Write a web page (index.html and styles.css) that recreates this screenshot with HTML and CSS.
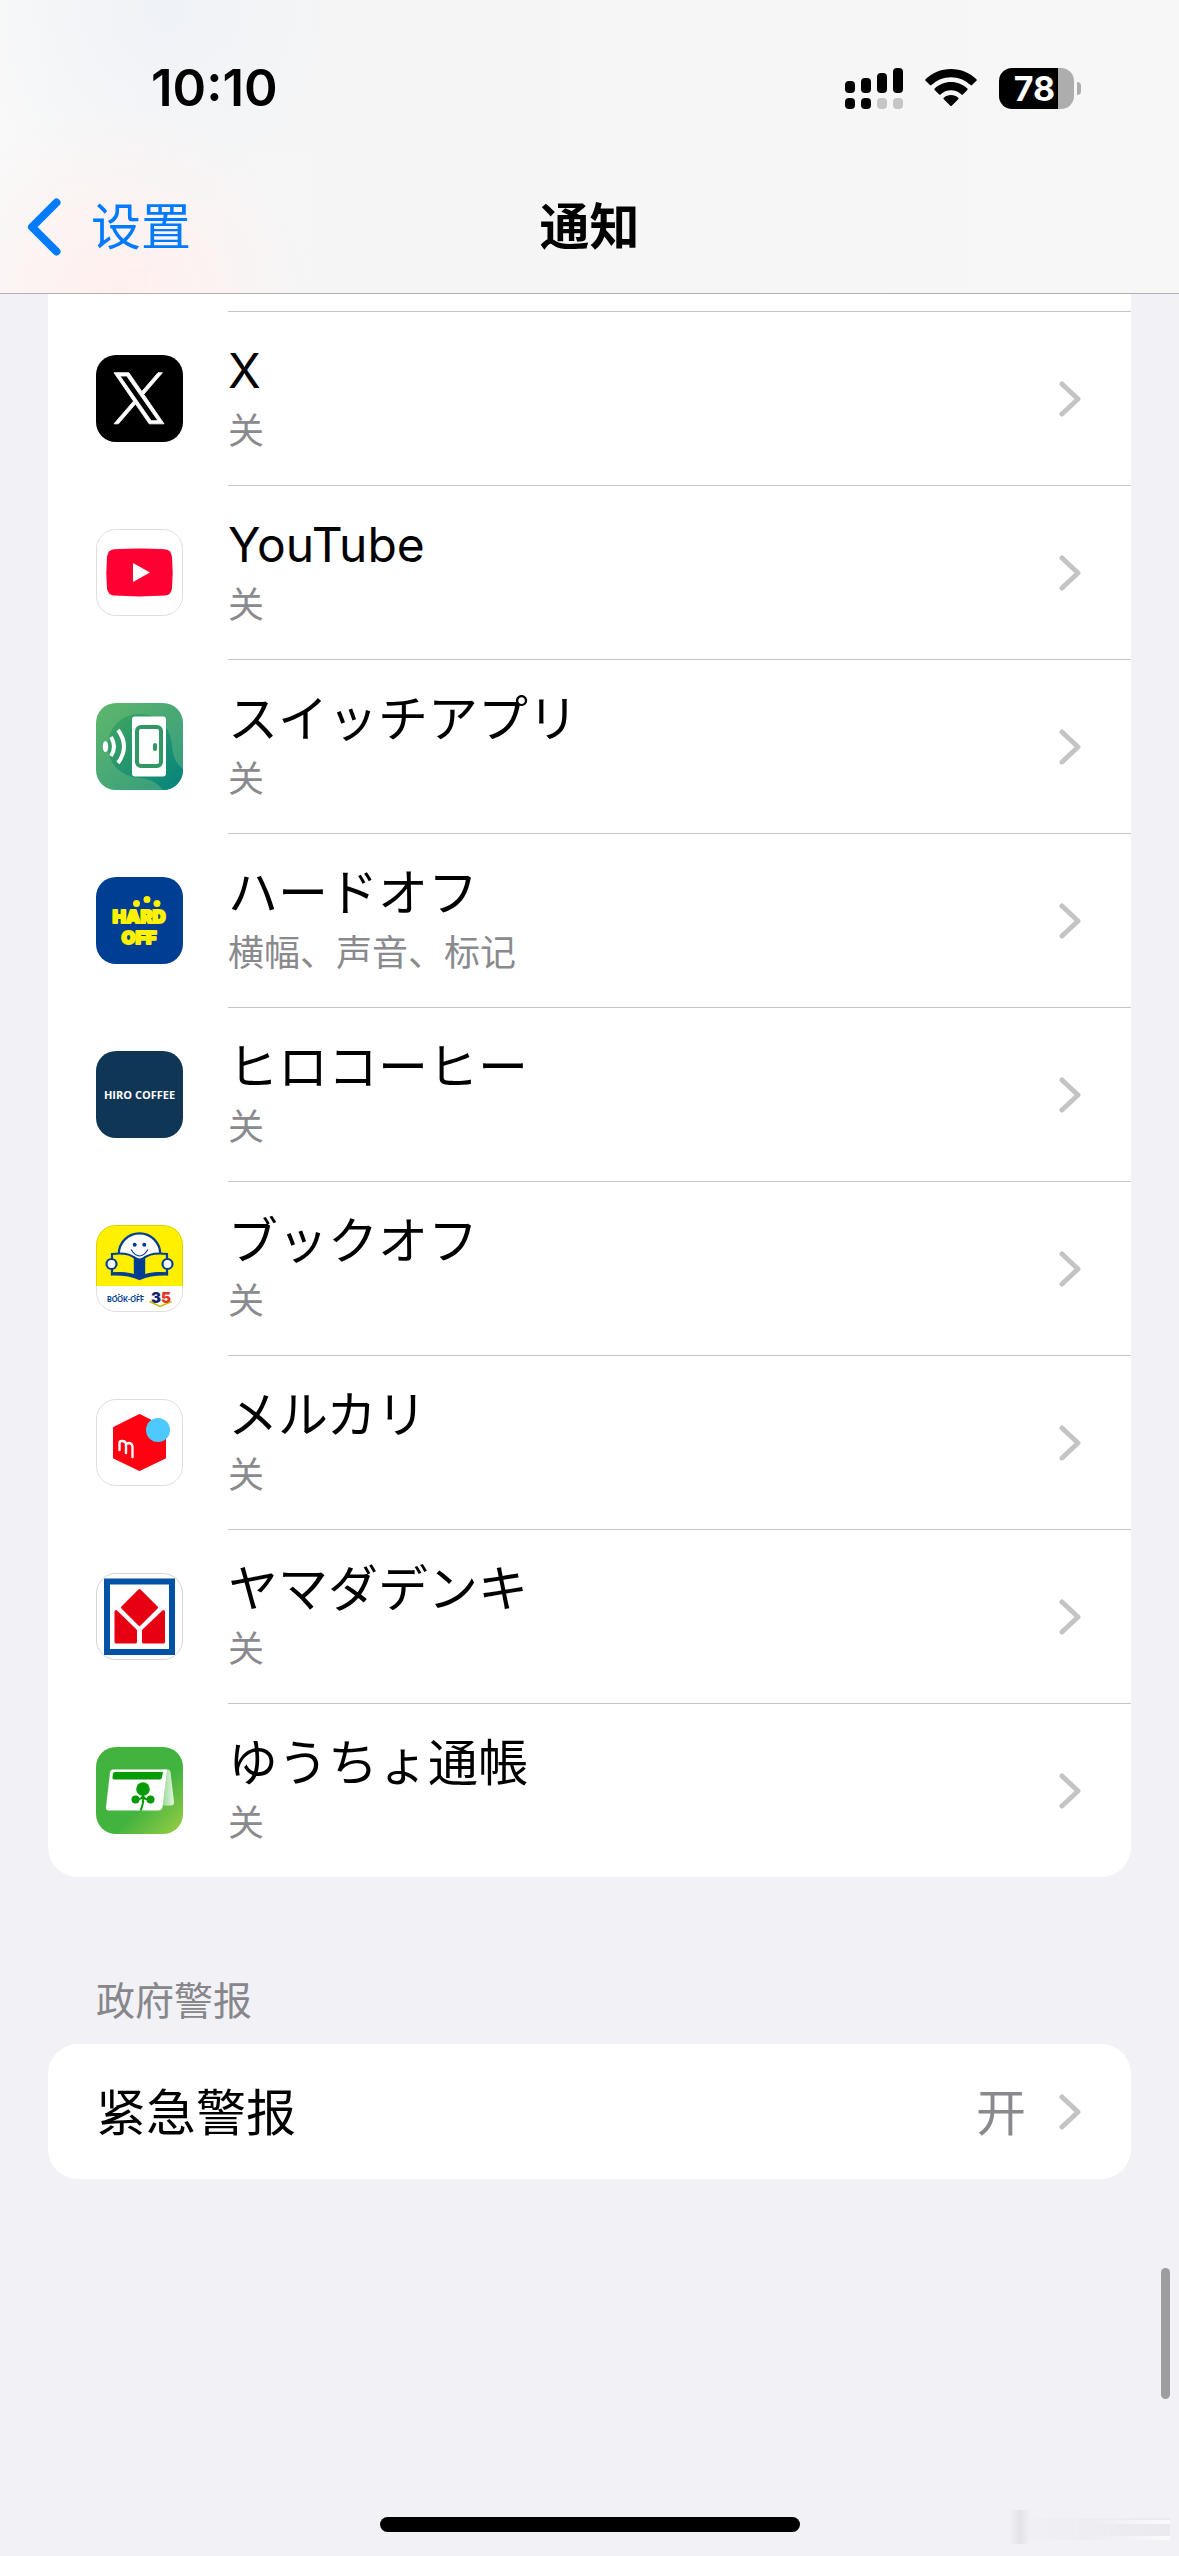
FILE: index.html
```html
<!DOCTYPE html>
<html lang="zh-CN">
<head>
<meta charset="utf-8">
<meta name="viewport" content="width=device-width, initial-scale=1">
<title>通知</title>
<link rel="stylesheet" href="styles.css">
</head>
<body>
<svg class="defs" width="0" height="0" aria-hidden="true">
  <symbol id="chevron" viewBox="0 0 22 36"><path d="M3 3 19 18 3 33" fill="none" stroke="#c4c4c7" stroke-width="5" stroke-linecap="round" stroke-linejoin="round"/></symbol>
</svg>

<header class="header">
  <div class="status">
    <time class="clock">10:10</time>
    <div class="indicators">
      <svg class="signal" viewBox="0 0 58 41" aria-hidden="true">
        <rect x="0" y="13" width="10" height="12" rx="4"/>
        <rect x="16" y="10" width="10" height="15" rx="4"/>
        <rect x="32" y="5" width="10" height="20" rx="4"/>
        <rect x="48" y="0" width="10" height="25" rx="4"/>
        <rect x="0" y="30" width="10" height="11" rx="4"/>
        <rect x="16" y="30" width="10" height="11" rx="4"/>
        <rect x="32" y="30" width="10" height="11" rx="4" fill="#c5c5c5"/>
        <rect x="48" y="30" width="10" height="11" rx="4" fill="#c5c5c5"/>
      </svg>
      <svg class="wifi" viewBox="0 0 52 38" aria-hidden="true">
        <path d="M26 0C16 0 7 4 .6 10.200a1 1 0 0 0 0 1.500l4.400 4.400a1 1 0 0 0 1.400 0C11.600 11.200 18.400 8.200 26 8.200s14.400 3 19.600 7.900a1 1 0 0 0 1.400 0l4.400-4.400a1 1 0 0 0 0-1.500C45 4 36 0 26 0z"/>
        <path d="M26 13c-6.300 0-12 2.500-16.300 6.500a1 1 0 0 0 0 1.500l4.400 4.400a1 1 0 0 0 1.400 0C18.300 22.800 22 21.200 26 21.200s7.700 1.600 10.500 4.200a1 1 0 0 0 1.400 0l4.400-4.400a1 1 0 0 0 0-1.500C38 15.500 32.300 13 26 13z"/>
        <path d="M26 26c-2.800 0-5.300 1-7.200 2.700a1 1 0 0 0 0 1.500l6.500 6.500a1 1 0 0 0 1.400 0l6.500-6.500a1 1 0 0 0 0-1.500C31.300 27 28.800 26 26 26z"/>
      </svg>
      <div class="battery"><span class="battery-level">78</span></div>
    </div>
  </div>
  <nav class="nav">
    <a class="back" href="#settings">
      <svg class="back-icon" viewBox="0 0 34 58" aria-hidden="true"><path d="M29.500 4.500 5 29 29.500 53.500" fill="none" stroke="#007aff" stroke-width="8" stroke-linecap="round" stroke-linejoin="round"/></svg>
      <span>设置</span>
    </a>
    <h1 class="title">通知</h1>
  </nav>
</header>

<main class="content">
  <ul class="card card-scrolled">
    <li class="row-tail"></li>
    <li>
      <a class="row" href="#x">
        <svg class="app-icon" viewBox="0 0 87 87" aria-hidden="true">
          <rect width="87" height="87" rx="20"/>
          <path transform="translate(18 17.700) scale(.0417)" fill="#fff" stroke="#fff" stroke-width="20" d="M714.163 519.284L1160.890 0H1055.030L667.137 450.887L357.328 0H0L468.492 681.821L0 1226.370H105.866L515.491 750.218L842.672 1226.370H1200L714.137 519.284ZM569.165 687.828L521.697 619.934L144.011 79.694H306.615L611.412 515.685L658.880 583.579L1055.080 1150.300H892.476L569.165 687.854Z"/>
        </svg>
        <span class="row-body"><span class="row-text"><span class="name name-latin">X</span><span class="detail">关</span></span><svg class="chevron" aria-hidden="true"><use href="#chevron"/></svg></span>
      </a>
    </li>
    <li>
      <a class="row" href="#youtube">
        <svg class="app-icon" viewBox="0 0 87 87" aria-hidden="true">
          <rect x=".5" y=".5" width="86" height="86" rx="19.500" fill="#fff" stroke="#dedede"/>
          <path fill="#ff0033" d="M18 20.300Q43.500 18.700 69 20.300Q75 20.800 76 27.500Q77.400 43.500 76 59.500Q75 66 69 66.600Q43.500 68.200 18 66.600Q12 66 11 59.500Q9.600 43.500 11 27.500Q12 20.800 18 20.300z"/>
          <path fill="#fff" d="M37 34 54 43.500 37 53z"/>
        </svg>
        <span class="row-body"><span class="row-text"><span class="name name-latin">YouTube</span><span class="detail">关</span></span><svg class="chevron" aria-hidden="true"><use href="#chevron"/></svg></span>
      </a>
    </li>
    <li>
      <a class="row" href="#switch">
        <svg class="app-icon" viewBox="0 0 87 87" aria-hidden="true">
          <defs>
            <linearGradient id="sw-bg" x1="0" y1="0" x2="1" y2="1"><stop offset="0" stop-color="#5fb76b"/><stop offset="1" stop-color="#329a80"/></linearGradient>
            <linearGradient id="sw-blob" x1="0" y1="0" x2="1" y2="1"><stop offset="0" stop-color="#3fa561"/><stop offset="1" stop-color="#05837c"/></linearGradient>
            <clipPath id="sw-clip"><rect width="87" height="87" rx="20"/></clipPath>
          </defs>
          <g clip-path="url(#sw-clip)">
            <rect width="87" height="87" fill="url(#sw-bg)"/>
            <path fill="url(#sw-blob)" d="M12 43C12 24 26 11 44 11C62 11 74 23 76 42C77 54 80 61 87 66V87H67C61 79 54 76 44 75C26 74 12 62 12 43z"/>
            <ellipse cx="9.500" cy="43.500" rx="2.700" ry="5.500" fill="#fff"/>
            <path d="M15 34Q21 43.500 15 53M22 27Q34 43.500 22 60" fill="none" stroke="#fff" stroke-width="4"/>
            <rect x="36" y="13.500" width="34" height="60" rx="3" fill="#fff"/>
            <rect x="41" y="24" width="24" height="39" rx="4" fill="#fff" stroke="#2f9865" stroke-width="4"/>
            <rect x="57" y="40" width="4" height="8" rx="2" fill="#2f9865"/>
          </g>
        </svg>
        <span class="row-body"><span class="row-text"><span class="name" lang="ja">スイッチアプリ</span><span class="detail">关</span></span><svg class="chevron" aria-hidden="true"><use href="#chevron"/></svg></span>
      </a>
    </li>
    <li>
      <a class="row" href="#hardoff">
        <svg class="app-icon" viewBox="0 0 87 87" aria-hidden="true">
          <rect width="87" height="87" rx="20" fill="#003e94"/>
          <g fill="#fff100" text-anchor="middle">
            <circle cx="40.500" cy="26.500" r="3.500"/><circle cx="51" cy="22.500" r="3.500"/><circle cx="61" cy="26.500" r="3.500"/>
            <text class="logo-hard" x="43" y="46">HARD</text>
            <text class="logo-hard" x="43" y="67">OFF</text>
          </g>
        </svg>
        <span class="row-body"><span class="row-text"><span class="name" lang="ja">ハードオフ</span><span class="detail">横幅、声音、标记</span></span><svg class="chevron" aria-hidden="true"><use href="#chevron"/></svg></span>
      </a>
    </li>
    <li>
      <a class="row" href="#hirocoffee">
        <svg class="app-icon" viewBox="0 0 87 87" aria-hidden="true">
          <rect width="87" height="87" rx="20" fill="#103656"/>
          <text class="logo-hiro" x="43.500" y="48" text-anchor="middle" fill="#fff">HIRO COFFEE</text>
        </svg>
        <span class="row-body"><span class="row-text"><span class="name" lang="ja">ヒロコーヒー</span><span class="detail">关</span></span><svg class="chevron" aria-hidden="true"><use href="#chevron"/></svg></span>
      </a>
    </li>
    <li>
      <a class="row" href="#bookoff">
        <svg class="app-icon" viewBox="0 0 87 87" aria-hidden="true">
          <defs><clipPath id="bo-clip"><rect width="87" height="87" rx="20"/></clipPath></defs>
          <g clip-path="url(#bo-clip)">
            <rect width="87" height="87" fill="#fff"/>
            <rect width="87" height="61" fill="#fff000"/>
          </g>
          <g stroke="#003e94" stroke-width="2.200">
            <circle cx="43.500" cy="29" r="20.700" fill="#fff"/>
            <path fill="#fff000" d="M16 29Q32 27 39 33V50.500Q30 47 16 48.500z"/>
            <path fill="#fff000" d="M71 29Q55 27 48 33V50.500Q57 47 71 48.500z"/>
            <path fill="#003e94" d="M39 33Q43.500 36 48 33V51Q57 48 71 48.500V49.500Q55 49 43.500 54Q32 49 16 49.500V48.500Q30 48 39 51z"/>
            <circle cx="15.500" cy="39" r="5" fill="#fff"/>
            <circle cx="71.500" cy="39" r="5" fill="#fff"/>
          </g>
          <g fill="#003e94"><circle cx="38.700" cy="19.700" r="2"/><circle cx="48.300" cy="19.700" r="2"/></g>
          <path d="M35 24.500Q43.500 37.500 52 24.500" fill="none" stroke="#003e94" stroke-width="1.200"/>
          <text class="logo-book" x="11" y="77" fill="#003e94">BOOK-OFF</text>
          <g fill="#003e94"><circle cx="20" cy="70.500" r=".8"/><circle cx="23" cy="69.500" r=".8"/><circle cx="26" cy="70.500" r=".8"/><circle cx="39" cy="70.500" r=".8"/><circle cx="42" cy="69.500" r=".8"/><circle cx="45" cy="70.500" r=".8"/></g>
          <path d="M53.500 76.500 64 81.500 75.500 76.500" fill="none" stroke="#c9b600" stroke-width="1.500"/>
          <text class="logo-35" x="55" y="78" fill="#12236f">3<tspan fill="#e8331f">5</tspan></text>
          <rect x=".5" y=".5" width="86" height="86" rx="19.500" fill="none" stroke="#000" stroke-opacity=".13"/>
        </svg>
        <span class="row-body"><span class="row-text"><span class="name" lang="ja">ブックオフ</span><span class="detail">关</span></span><svg class="chevron" aria-hidden="true"><use href="#chevron"/></svg></span>
      </a>
    </li>
    <li>
      <a class="row" href="#mercari">
        <svg class="app-icon" viewBox="0 0 87 87" aria-hidden="true">
          <rect x=".5" y=".5" width="86" height="86" rx="19.500" fill="#fff" stroke="#dedede"/>
          <path fill="#ff0211" stroke="#ff0211" stroke-width="3" stroke-linejoin="round" d="M43.500 16.500 68.500 29V58.500L43.500 70.500 18.500 58.500V29z"/>
          <circle cx="62" cy="31" r="12" fill="#4dc9ff"/>
          <path d="M23.500 51V44Q23.500 42 26 42Q30 42 30 46V54M30 46Q30.500 44 33 44Q36.500 44.500 36.500 48.500V58" fill="none" stroke="#fff" stroke-width="2.400" stroke-linecap="round"/>
        </svg>
        <span class="row-body"><span class="row-text"><span class="name" lang="ja">メルカリ</span><span class="detail">关</span></span><svg class="chevron" aria-hidden="true"><use href="#chevron"/></svg></span>
      </a>
    </li>
    <li>
      <a class="row" href="#yamada">
        <svg class="app-icon" viewBox="0 0 87 87" aria-hidden="true">
          <rect x=".5" y=".5" width="86" height="86" rx="19.500" fill="#fff" stroke="#d4d4d4"/>
          <rect x="11" y="8.500" width="65" height="70.500" fill="#fff" stroke="#0052a4" stroke-width="6"/>
          <g fill="#e60012" stroke="#e60012" stroke-width="3" stroke-linejoin="round">
            <path d="M43.500 17.500 60.500 34.500 43.500 51.500 26.500 34.500z"/>
            <path d="M20 38.500 39.500 57.500V69H20z"/>
            <path d="M67.500 38.500 47.500 57.500V69H67.500z"/>
          </g>
        </svg>
        <span class="row-body"><span class="row-text"><span class="name" lang="ja">ヤマダデンキ</span><span class="detail">关</span></span><svg class="chevron" aria-hidden="true"><use href="#chevron"/></svg></span>
      </a>
    </li>
    <li>
      <a class="row" href="#yucho">
        <svg class="app-icon" viewBox="0 0 87 87" aria-hidden="true">
          <defs>
            <linearGradient id="yu-bg" x1="0" y1="0" x2="1" y2="1"><stop offset=".6" stop-color="#43b340"/><stop offset="1" stop-color="#9bcf45"/></linearGradient>
            <linearGradient id="yu-fold" x1="0" y1="0" x2="1" y2="0"><stop offset="0" stop-color="#8ed48b"/><stop offset="1" stop-color="#e3f6df"/></linearGradient>
          </defs>
          <rect width="87" height="87" rx="20" fill="url(#yu-bg)"/>
          <path fill="url(#yu-fold)" d="M66 22.500H72Q74 22.500 74.500 25L78 55Q78 58.500 75 58.500H65z"/>
          <path fill="#fff" d="M17 22.500H71L66.500 60Q66 63.500 62 63.500H13Q9.500 63.500 10 60L14 25.500Q14.500 22.500 17 22.500z"/>
          <path fill="#069a05" d="M19 25H67L66 30.500Q65.500 32.500 63.500 32.500H18.500Q16.200 32.500 16.500 30L17 26.500Q17.500 25 19 25z"/>
          <g fill="#069a05"><circle cx="47" cy="42" r="6.800"/><circle cx="39.500" cy="52.500" r="4"/><circle cx="54.500" cy="52.500" r="4"/></g>
          <path d="M47 47Q48 57 44.500 63.500M41 52Q46 53 47 48Q48 53 53 52" fill="none" stroke="#069a05" stroke-width="2"/>
        </svg>
        <span class="row-body"><span class="row-text"><span class="name" lang="ja">ゆうちょ通帳</span><span class="detail">关</span></span><svg class="chevron" aria-hidden="true"><use href="#chevron"/></svg></span>
      </a>
    </li>
  </ul>

  <h2 class="section-title">政府警报</h2>
  <a class="card setting" href="#alerts">
    <span class="setting-name">紧急警报</span>
    <span class="setting-value">开</span>
    <svg class="chevron" aria-hidden="true"><use href="#chevron"/></svg>
  </a>
</main>

<div class="scroll-thumb"></div>
<div class="home-indicator"></div>
<div class="smudge"></div>
</body>
</html>
```
FILE: styles.css
```css
* {
  box-sizing: border-box;
}

body {
  margin: 0;
  min-height: 100vh;
  background: #f2f1f6;
  color: #000;
  font-family: Inter, "Noto Sans CJK SC", sans-serif;
  font-size: 50px;
}

:lang(ja) {
  font-family: Inter, "Noto Sans CJK JP", sans-serif;
}

a {
  color: inherit;
  text-decoration: none;
}

.defs {
  position: absolute;
}

/* Header */

.header {
  border-bottom: 1px solid #b0b0b1;
  background:
    radial-gradient(circle 190px at 10% 100%, #fff0ee, transparent),
    radial-gradient(circle 200px at 14% 4%, #eff2f7, transparent),
    linear-gradient(90deg, #f9f9f9, #f5f5f5 30%, #f7f7f7);
}

.status {
  display: flex;
  align-items: center;
  justify-content: space-between;
  padding: 56px 105px 43px 151px;
}

.clock {
  font-size: 51px;
  font-weight: 600;
  line-height: 64px;
}

.indicators {
  display: flex;
  align-items: center;
  gap: 22px;
}

.signal {
  width: 58px;
  height: 41px;
}

.wifi {
  width: 52px;
  height: 38px;
}

.battery {
  position: relative;
  width: 75px;
  height: 41px;
  border-radius: 13px;
  background: linear-gradient(90deg, #000 59px, #adadad 59px);
  color: #fff;
  font-size: 34px;
  font-weight: 700;
  line-height: 41px;
  text-align: center;
}

.battery::after {
  content: "";
  position: absolute;
  top: 14px;
  right: -7px;
  width: 4px;
  height: 13px;
  border-radius: 0 4px 4px 0;
  background: #adadad;
}

.battery-level {
  padding-right: 4px;
}

.nav {
  display: grid;
  grid-template-columns: 1fr auto 1fr;
  align-items: center;
  padding: 0 27px 2px;
  line-height: 128px;
}

.back {
  display: flex;
  align-items: center;
  gap: 30px;
  color: #007aff;
}

.back-icon {
  width: 34px;
  height: 58px;
}

.title {
  margin: 0;
  font-size: 50px;
  font-weight: 600;
}

/* Grouped lists */

.content {
  padding: 0 48px;
}

.card {
  border-radius: 30px;
  background: #fff;
}

.card-scrolled {
  margin: 0;
  padding: 0;
  border-radius: 0 0 30px 30px;
  list-style: none;
}

.row-tail {
  height: 17px;
}

.row {
  display: flex;
  align-items: center;
  gap: 45px;
  padding-left: 48px;
}

.app-icon {
  flex: none;
  width: 87px;
  height: 87px;
}

.row-body {
  display: flex;
  flex: 1;
  align-items: center;
  justify-content: space-between;
  border-top: 1px solid #c6c6c8;
  padding: 25px 50px 25px 0;
}

.row-text {
  display: flex;
  flex-direction: column;
  padding-bottom: 3px;
}

.name {
  line-height: 68px;
}

.name-latin {
  font-size: 48px;
}

.detail {
  color: #8a8a8e;
  font-size: 36px;
  line-height: 52px;
}

.chevron {
  flex: none;
  width: 22px;
  height: 36px;
}

.section-title {
  margin: 0;
  padding: 92px 48px 12px;
  color: #86868b;
  font-size: 39px;
  font-weight: 400;
  line-height: 63px;
}

.setting {
  display: flex;
  align-items: center;
  gap: 33px;
  padding: 0 50px 0 48px;
  line-height: 131px;
}

.setting-name,
.setting-value {
  padding-top: 4px;
}

.setting-name {
  flex: 1;
}

.setting-value {
  color: #8a8a8e;
}

/* Lettering inside the app icons */

.logo-hard {
  font: 900 18px Inter, sans-serif;
  stroke: #fff100;
  stroke-width: 2px;
  stroke-linejoin: round;
}

.logo-hiro {
  font: 700 11px "Open Sans", sans-serif;
}

.logo-book {
  font: 900 7px Lato, sans-serif;
}

.logo-35 {
  font: 900 15px Inter, sans-serif;
}

/* Overlays */

.scroll-thumb {
  position: fixed;
  right: 9px;
  bottom: 157px;
  width: 9px;
  height: 131px;
  border-radius: 5px;
  background: #9d9d9f;
}

.home-indicator {
  position: fixed;
  bottom: 24px;
  left: 50%;
  width: 420px;
  height: 15px;
  border-radius: 8px;
  background: #000;
  transform: translateX(-50%);
}

.smudge {
  position: fixed;
  right: 9px;
  bottom: 12px;
  width: 160px;
  height: 34px;
  background:
    linear-gradient(90deg, transparent 50%, #fbfbfd) 0 10px / 100% 4px no-repeat,
    linear-gradient(90deg, transparent 50%, #fbfbfd) 0 26px / 100% 4px no-repeat,
    linear-gradient(90deg, transparent, #e2e2e7, transparent) 0 0 / 20px 100% no-repeat,
    linear-gradient(90deg, transparent, #e9e9ee) 0 8px / 100% 22px no-repeat;
}
```
